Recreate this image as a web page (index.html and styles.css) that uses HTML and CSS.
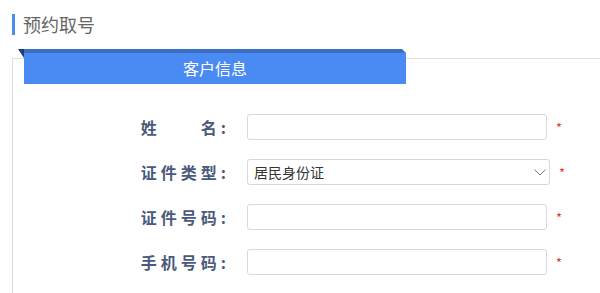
FILE: index.html
```html
<!DOCTYPE html>
<html lang="zh-CN">
<head>
<meta charset="utf-8">
<title>预约取号</title>
<link rel="stylesheet" href="styles.css">
</head>
<body>
<div class="page-title"><span class="title-bar"></span><span class="title-text">预约取号</span></div>
<div class="panel">
  <div class="tab">客户信息</div>
  <div class="form">
    <div class="row">
      <label class="label">姓&emsp;&emsp;名<span class="colon">:</span></label>
      <input class="field" type="text">
      <span class="req">*</span>
    </div>
    <div class="row">
      <label class="label">证件类型<span class="colon">:</span></label>
      <div class="field select"><span>居民身份证</span>
        <svg class="chev" width="12" height="7" viewBox="0 0 12 7"><path d="M0.5 0.5 L6 6 L11.5 0.5" fill="none" stroke="#7a7a7a" stroke-width="1"/></svg>
      </div>
      <span class="req">*</span>
    </div>
    <div class="row">
      <label class="label">证件号码<span class="colon">:</span></label>
      <input class="field" type="text">
      <span class="req">*</span>
    </div>
    <div class="row">
      <label class="label">手机号码<span class="colon">:</span></label>
      <input class="field" type="text">
      <span class="req">*</span>
    </div>
  </div>
</div>
</body>
</html>
```
FILE: styles.css
```css
html, body {
  margin: 0;
  padding: 0;
  background: #fff;
  font-family: "Noto Sans CJK SC", "Noto Sans", sans-serif;
}
.page-title {
  display: flex;
  align-items: center;
  padding: 14px 0 0 12px;
  height: 21px;
}
.title-bar {
  display: block;
  width: 3px;
  height: 21px;
  background: #4a8cf0;
}
.title-text {
  margin-left: 8px;
  font-size: 18px;
  line-height: 21px;
  color: #666;
}
.panel {
  margin: 23px 0 0 12px;
  border-top: 1px solid #dcdcdc;
  border-left: 1px solid #dcdcdc;
  height: 240px;
}
.tab {
  position: relative;
  margin: -10px 0 0 11px;
  width: 382px;
  height: 31px;
  border-top: 4px solid #3b6fc2;
  background: #4a8bf3;
  color: #fff;
  font-size: 16px;
  line-height: 31px;
  text-align: center;
}
.tab::before {
  content: "";
  position: absolute;
  left: -6px;
  top: -4px;
  width: 0;
  height: 0;
  border-top: 9px solid #1f3f7c;
  border-left: 6px solid transparent;
}
.tab::after {
  content: "";
  position: absolute;
  right: 0;
  top: -4px;
  width: 0;
  height: 0;
  border-top: 4px solid #fff;
  border-left: 4px solid transparent;
}
.form {
  padding-top: 30px;
  display: flex;
  flex-direction: column;
  gap: 19px;
}
.row {
  display: flex;
  align-items: center;
  height: 26px;
}
.label {
  width: 213px;
  margin-right: 21px;
  text-align: right;
  font-size: 16px;
  font-weight: bold;
  letter-spacing: 4px;
  color: #4b5a7c;
}
.colon {
  letter-spacing: 0;
}
.field {
  box-sizing: border-box;
  width: 300px;
  height: 26px;
  border: 1px solid #d9d9d9;
  border-radius: 3px;
  background: #fff;
  margin: 0;
  padding: 0 6px;
  font-family: inherit;
  font-size: 14px;
  color: #333;
  outline: none;
}
.select {
  width: 303px;
  display: flex;
  align-items: center;
  justify-content: space-between;
  padding: 0 3px 0 6px;
}
.chev {
  display: block;
}
.req {
  margin-left: 9px;
  color: #e0393e;
  font-size: 13px;
  line-height: 13px;
}
```
